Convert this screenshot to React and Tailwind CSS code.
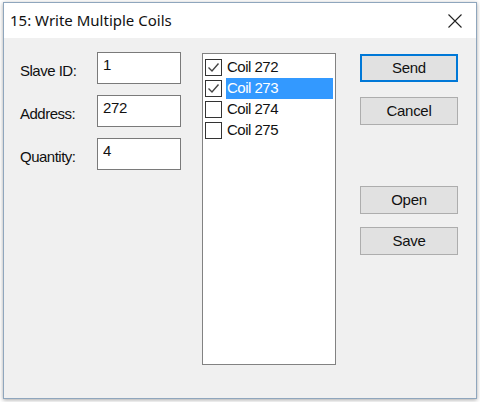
import React, { useState } from 'react';

const FIELDS = [
  { label: 'Slave ID:', value: '1' },
  { label: 'Address:', value: '272' },
  { label: 'Quantity:', value: '4' }
];

const COILS = [
  { name: 'Coil 272', checked: true },
  { name: 'Coil 273', checked: true },
  { name: 'Coil 274', checked: false },
  { name: 'Coil 275', checked: false }
];

const Checkbox = ({ checked }) => (
  <div className="w-[17px] h-[17px] border border-[#333] bg-white flex items-center justify-center shrink-0">
    {checked && (
      <svg width="13" height="13" viewBox="0 0 13 13">
        <path d="M1.5 6.5 L5 10 L11.5 2.5" fill="none" stroke="#444" strokeWidth="1.4" />
      </svg>
    )}
  </div>
);

const Button = ({ label, focused }) => (
  <button
    className={`w-[98px] h-[28px] bg-[#e1e1e1] text-[15px] text-[#111] tracking-[-0.3px] ${
      focused ? 'border-2 border-[#0078d7]' : 'border border-[#adadad]'
    }`}
  >
    {label}
  </button>
);

const App = () => {
  const [fields, setFields] = useState(FIELDS);
  const [selected] = useState(1);

  return (
    <div className="w-[480px] h-[402px] bg-white pt-[2px] pl-[3px]" style={{ fontFamily: '"Liberation Sans", Arial, sans-serif' }}>
      <div className="w-[474px] h-[397px] border border-[#8fa6bd] flex flex-col shadow-[0_1px_4px_rgba(0,0,0,0.35)]">
        {/* title bar */}
        <div className="h-[35px] bg-white flex items-center justify-between pl-[6px] pr-[14px] shrink-0">
          <span className="text-[15px] text-[#111]" style={{ fontFamily: '"Noto Sans", sans-serif' }}>
            15: Write Multiple Coils
          </span>
          <svg width="14" height="14" viewBox="0 0 14 14">
            <path d="M0.5 0.5 L13.5 13.5 M13.5 0.5 L0.5 13.5" stroke="#222" strokeWidth="1.1" />
          </svg>
        </div>

        {/* client area */}
        <div className="flex-1 bg-[#f0f0f0] flex pt-[14px] pl-[16px]">
          <div className="flex flex-col gap-[11px]">
            {fields.map((f, i) => (
              <div key={f.label} className="flex items-center">
                <label className="w-[77px] text-[15px] tracking-[-0.5px] text-[#111] pt-[6px]">{f.label}</label>
                <input
                  value={f.value}
                  onChange={(e) => {
                    const next = [...fields];
                    next[i] = { ...f, value: e.target.value };
                    setFields(next);
                  }}
                  className="w-[84px] h-[32px] bg-white border border-[#7a7a7a] pl-[5px] pb-[7px] text-[15px] tracking-[-0.3px] text-[#111] outline-none"
                />
              </div>
            ))}
          </div>

          <div className="ml-[21px] mt-[1px] w-[134px] h-[312px] bg-white border border-[#828282] pt-[3px] pl-[2px] pr-[2px]">
            {COILS.map((c, i) => (
              <div key={c.name} className="h-[21px] flex items-center">
                <Checkbox checked={c.checked} />
                <div
                  className={`ml-[4px] flex-1 h-[21px] flex items-center text-[15px] tracking-[-0.5px] ${
                    i === selected ? 'bg-[#3399ff] text-white' : 'text-[#111]'
                  }`}
                >
                  <span className="pl-[1px]">{c.name}</span>
                </div>
              </div>
            ))}
          </div>

          <div className="ml-[24px] mt-[2px] flex flex-col">
            <Button label="Send" focused />
            <div className="mt-[15px]"><Button label="Cancel" /></div>
            <div className="mt-[61px]"><Button label="Open" /></div>
            <div className="mt-[13px]"><Button label="Save" /></div>
          </div>
        </div>
      </div>
    </div>
  );
};

export default App;
